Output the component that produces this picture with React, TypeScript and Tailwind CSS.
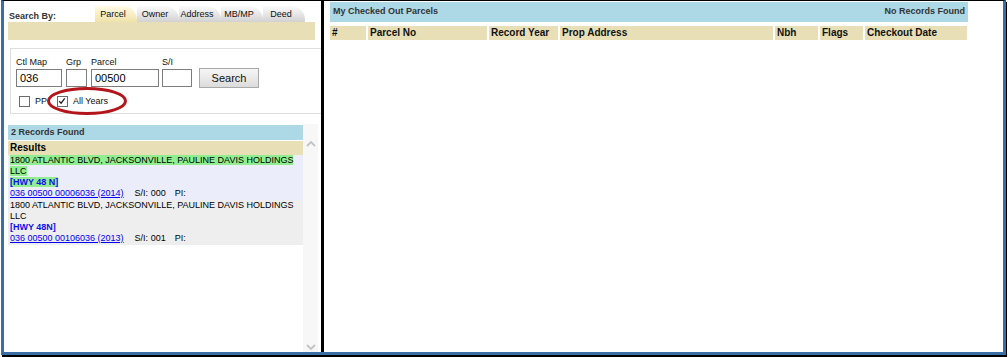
import React from "react";

// ---- Types ----
type Result = {
  address: string;
  road: string;
  parcel: string;
  si: string;
  highlight?: boolean;
};

const tabs = ["Parcel", "Owner", "Address", "MB/MP", "Deed"];

const results: Result[] = [
  {
    address: "1800 ATLANTIC BLVD, JACKSONVILLE, PAULINE DAVIS HOLDINGS LLC",
    road: "[HWY 48 N]",
    parcel: "036 00500 00006036 (2014)",
    si: "000",
    highlight: true,
  },
  {
    address: "1800 ATLANTIC BLVD, JACKSONVILLE, PAULINE DAVIS HOLDINGS LLC",
    road: "[HWY 48N]",
    parcel: "036 00500 00106036 (2013)",
    si: "001",
  },
];

const columns = [
  { label: "#", w: "w-[36px]" },
  { label: "Parcel No", w: "w-[119px]" },
  { label: "Record Year", w: "w-[69px]" },
  { label: "Prop Address", w: "w-[213px]" },
  { label: "Nbh", w: "w-[43px]" },
  { label: "Flags", w: "w-[43px]" },
  { label: "Checkout Date", w: "w-[102px]" },
];

function Checkbox({ checked = false }: { checked?: boolean }) {
  return (
    <span className="relative inline-block h-[11px] w-[11px] border border-[#6b6b6b] bg-white">
      {checked && (
        <svg viewBox="0 0 11 11" className="absolute left-0 top-0 h-[9px] w-[9px]">
          <path d="M1.5 5.2 L3.8 7.6 L8.2 1.6" fill="none" stroke="#222" strokeWidth="1.6" />
        </svg>
      )}
    </span>
  );
}

function Field({ label, w, value = "" }: { label: string; w: string; value?: string }) {
  return (
    <div className="flex flex-col">
      <span className="h-[12px] text-[9px] leading-[10px] text-[#111]">{label}</span>
      <div className={`${w} h-[18px] border border-[#7d7d7d] bg-white pl-[3px] text-[11px] leading-[16px] text-black`}>
        {value}
      </div>
    </div>
  );
}

function Chevron({ up }: { up?: boolean }) {
  return (
    <svg viewBox="0 0 10 6" className="h-[6px] w-[10px]">
      <path
        d={up ? "M1 5 L5 1 L9 5" : "M1 1 L5 5 L9 1"}
        fill="none"
        stroke="#c4c4c4"
        strokeWidth="1.8"
      />
    </svg>
  );
}

export default function App() {
  return (
    <div className="h-[357px] w-[1008px] bg-white pl-px font-['Liberation_Sans',Arial,sans-serif] text-black">
      <div className="flex h-[355px] w-[1005px] border-t border-l-[3px] border-r-[3px] border-b-[3px] border-t-black border-l-[#3a6ea5] border-r-[#3a6ea5] border-b-[#3a6ea5] shadow-[1px_2px_0_0_#000]">
        {/* Left: search */}
        <div className="relative flex w-[320px] shrink-0 flex-col overflow-hidden border-r-[3px] border-black pl-[4px]">
          <div className="flex h-[21px] items-end">
            <span className="w-[87px] pb-[1px] pl-[1px] text-[9px] font-bold leading-[10px] text-[#333]">Search By:</span>
            <div className="flex">
              {tabs.map((t, i) => (
                <div
                  key={t}
                  className={`h-[16px] w-[42px] rounded-tl-[2px] rounded-tr-[14px] pr-[6px] pt-[1px] text-center text-[9px] leading-[15px] text-[#111] ${
                    i === 0
                      ? "bg-gradient-to-b from-[#fffbe6] to-[#efe2a8]"
                      : "bg-gradient-to-b from-[#fbfbfb] to-[#d2d2d2]"
                  }`}
                >
                  {t}
                </div>
              ))}
            </div>
          </div>
          <div className="h-[18px] w-[307px] bg-[#e8dfb6]" />

          {/* Search box */}
          <div className="ml-[2px] mt-[8px] h-[66px] w-[316px] shrink-0 border border-[#dedede] pl-[5px] pt-[8px]">
            <div className="flex items-end">
              <Field label="Ctl Map" w="w-[46px]" value="036" />
              <div className="ml-[4px]">
                <Field label="Grp" w="w-[21px]" />
              </div>
              <div className="ml-[4px]">
                <Field label="Parcel" w="w-[68px]" value="00500" />
              </div>
              <div className="ml-[3px]">
                <Field label="S/I" w="w-[30px]" />
              </div>
              <button className="mb-[-1px] ml-[7px] h-[20px] w-[60px] border border-[#a9a9a9] bg-gradient-to-b from-[#f6f6f6] to-[#dcdcdc] text-[11px] leading-[18px] text-[#111]">
                Search
              </button>
            </div>
            <div className="mt-[8px] flex items-center pl-[3px] text-[9px] text-[#111]">
              <Checkbox />
              <span className="ml-[5px]">PP</span>
              <span className="ml-[10px] flex items-center">
                <Checkbox checked />
              </span>
              <span className="ml-[5px]">All Years</span>
            </div>
          </div>

          {/* red ring drawn over the All Years option */}
          <svg className="pointer-events-none absolute left-[42px] top-[85px] h-[30px] w-[82px]" viewBox="0 0 82 30">
            <ellipse cx="41" cy="15" rx="38.5" ry="12.5" fill="none" stroke="#b3151b" strokeWidth="3" />
          </svg>

          {/* Results list */}
          <div className="mt-[10px] flex min-h-0 flex-1">
            <div className="w-[295px] pt-px">
              <div className="h-[15px] bg-[#add8e6] pl-[3px] text-[9px] font-bold leading-[15px] text-[#333]">
                2 Records Found
              </div>
              <div className="mt-px h-[14px] bg-[#e8dfb6] pl-[2px] text-[10px] font-bold leading-[14px] text-black">
                Results
              </div>
              {results.map((r) => (
                <div
                  key={r.parcel}
                  className={`pb-[1px] pl-[2px] pr-[4px] text-[9px] leading-[11px] ${r.highlight ? "bg-[#ebeefa]" : "bg-[#eeeeee]"}`}
                >
                  <span className={r.highlight ? "bg-[#90ee90]" : ""}>
                    {r.address}
                    <br />
                    <b className="text-[#1010ee]">{r.road}</b>
                  </span>
                  <br />
                  <a className="text-[#0000ee] underline">{r.parcel}</a>
                  <span className="ml-[11px]">S/I: {r.si}</span>
                  <span className="ml-[9px]">PI:</span>
                </div>
              ))}
            </div>
            <div className="flex w-[15px] flex-col items-center justify-between bg-[#f7f7f7] pb-[2px] pt-[17px]">
              <Chevron up />
              <Chevron />
            </div>
          </div>
        </div>

        {/* Right: checked out parcels */}
        <div className="flex-1 pl-[6px] pt-[1px]">
          <div className="flex h-[20px] w-[638px] items-center justify-between bg-[#add8e6] px-[3px] text-[9px] font-bold text-[#333]">
            <span>My Checked Out Parcels</span>
            <span>No Records Found</span>
          </div>
          <div className="mt-[4px] flex gap-[2px]">
            {columns.map((c) => (
              <div
                key={c.label}
                className={`${c.w} h-[14px] bg-[#e8dfb6] pl-[2px] text-[10px] font-bold leading-[14px] text-[#111]`}
              >
                {c.label}
              </div>
            ))}
          </div>
        </div>
      </div>
    </div>
  );
}
